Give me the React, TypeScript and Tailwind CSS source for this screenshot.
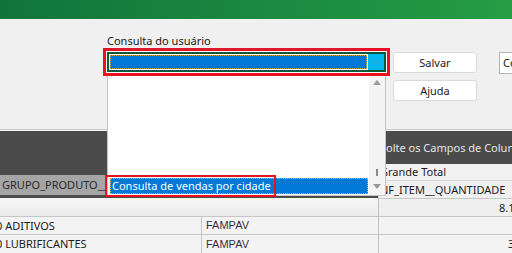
import React from 'react';

const font = { fontFamily: '"Noto Sans", "Open Sans", sans-serif' };
const arial = { fontFamily: '"Liberation Sans", Arial, sans-serif' };

const Chevron = () => (
  <svg width="9" height="5" viewBox="0 0 9 5" fill="none">
    <path d="M0.5 0.5 L4.5 4.5 L8.5 0.5" stroke="#5f8ea3" strokeWidth="1" />
  </svg>
);

const ComboList: React.FC = () => {
  return (
    <div className="absolute left-[4px] top-[43px] z-20 flex h-[120px] w-[279px] border-x border-b border-[#c4c4c4] bg-white">
      {/* itens */}
      <div className="flex flex-1 flex-col justify-end pb-[1px] pl-[2px] pr-[1px]">
        <div className="h-[16px] border border-dotted border-[#e2b64a] bg-[#0078d7] pl-[1px] text-[11px] leading-[14px] text-white whitespace-nowrap">
          Consulta de vendas por cidade
        </div>
      </div>
      {/* barra de rolagem */}
      <div className="relative w-[16px] shrink-0 bg-[#f4f4f4]">
        <div className="absolute left-[4px] top-[4px] h-0 w-0 border-x-[4px] border-b-[5px] border-x-transparent border-b-[#9a9a9a]" />
        <div className="absolute left-[7px] top-[93px] h-[7px] w-[2px] bg-[#8a8a8a]" />
        <div className="absolute left-[4px] top-[108px] h-0 w-0 border-x-[4px] border-t-[5px] border-x-transparent border-t-[#9a9a9a]" />
      </div>
    </div>
  );
};

export default function App() {
  return (
    <div className="h-[253px] w-[512px] overflow-hidden bg-[#f0f0f0] text-[#1b1b1b]" style={font}>
      {/* faixa verde */}
      <div className="h-[19px] bg-linear-to-r from-[#0f753b] to-[#269c45]" />

      {/* painel */}
      <div className="relative z-10 flex h-[110px] pl-[103px] pt-[14px]">
        <div className="relative w-[287px] shrink-0">
          <div className="h-[15px] pl-[4px] text-[11px] leading-[15px] whitespace-nowrap">Consulta do usuário</div>
          <div className="h-[28px] border-[3px] border-[#e81123] bg-white p-px">
            <div className="flex h-full border-2 border-[#0b5c36]">
              <div className="flex-1 bg-white p-px">
                <div className="h-full border border-dotted border-[#d9a83a] bg-[#0078d7]" />
              </div>
              <div className="flex w-[16px] items-center justify-center bg-[#00b7ef]">
                <Chevron />
              </div>
            </div>
          </div>
          <ComboList />
          <div className="absolute left-[2px] top-[142px] z-30 h-[22px] w-[171px] border-2 border-[#e81123]" />
        </div>

        <div className="ml-[3px] flex shrink-0 flex-col gap-[7px] pt-[19px]">
          <button className="h-[21px] w-[84px] rounded-[3px] border border-[#dadada] bg-white text-[11px] leading-[19px]">Salvar</button>
          <button className="h-[21px] w-[84px] rounded-[3px] border border-[#dadada] bg-white text-[11px] leading-[19px]">Ajuda</button>
        </div>

        <div className="ml-[22px] shrink-0 pt-[19px]">
          <div className="h-[22px] w-[40px] border border-[#b4b4b4] bg-white pl-[3px] text-[11px] leading-[20px]">Consulta</div>
        </div>
      </div>
      <div className="h-px bg-[#cdcdcd]" />
      <div className="h-px bg-[#f4f4f4]" />

      {/* tabela dinâmica */}
      <div className="flex h-[122px]">
        <div className="flex w-[378px] shrink-0 flex-col">
          <div className="h-[44px] bg-[#4b4b4b]" />
          <div className="h-[20px] bg-[#a5a5a5] pl-[2px] text-[11px] leading-[20px] text-[#2b2b2b] whitespace-nowrap">
            GRUPO_PRODUTO__DESCRICAO
          </div>
          <div className="h-[3px] bg-[#4b4b4b]" />
          <div className="h-[19px] border-b border-[#c6c6c6] bg-linear-to-b from-[#f6f6f6] to-[#ebebeb]" />
          <div className="flex h-[18px] border-b border-[#c6c6c6] bg-[#f3f3f3]">
            <div className="w-[202px] overflow-hidden border-r border-[#c6c6c6] text-[11px] leading-[17px] whitespace-nowrap">
              <span className="-ml-[4px] inline-block">0 ADITIVOS</span>
            </div>
            <div className="pl-[4px] text-[11px] leading-[17px] text-[#3a2c44]" style={arial}>
              FAMPAV
            </div>
          </div>
          <div className="flex h-[18px] bg-[#f3f3f3]">
            <div className="w-[202px] overflow-hidden border-r border-[#c6c6c6] text-[11px] leading-[18px] whitespace-nowrap">
              <span className="-ml-[4px] inline-block">0 LUBRIFICANTES</span>
            </div>
            <div className="pl-[4px] text-[11px] leading-[18px] text-[#3a2c44]" style={arial}>
              FAMPAV
            </div>
          </div>
        </div>

        <div className="flex flex-1 flex-col overflow-hidden border-l border-[#c0c0c0]">
          <div className="h-[33px] bg-[#4b4b4b] pl-px text-[11px] leading-[33px] text-[#e4e4e4] whitespace-nowrap">
            Solte os Campos de Coluna Aqui
          </div>
          <div className="h-[17px] border-b border-[#d6d6d6] bg-[#f2f2f2] pl-px text-[11px] leading-[16px] whitespace-nowrap">
            Grande Total
          </div>
          <div className="h-[17px] bg-[#f0f0f0] pl-px text-[11px] leading-[17px] whitespace-nowrap">NF_ITEM__QUANTIDADE</div>
          <div className="h-[19px] border-y border-[#c6c6c6] bg-[#efefef] pl-[120px] text-[11px] leading-[17px] whitespace-nowrap">8.152,00</div>
          <div className="h-[18px] border-b border-[#c6c6c6] bg-[#f3f3f3]" />
          <div className="h-[18px] bg-[#f3f3f3] pl-[129px] text-[11px] leading-[18px] whitespace-nowrap">3.420,00</div>
        </div>
      </div>
    </div>
  );
}
